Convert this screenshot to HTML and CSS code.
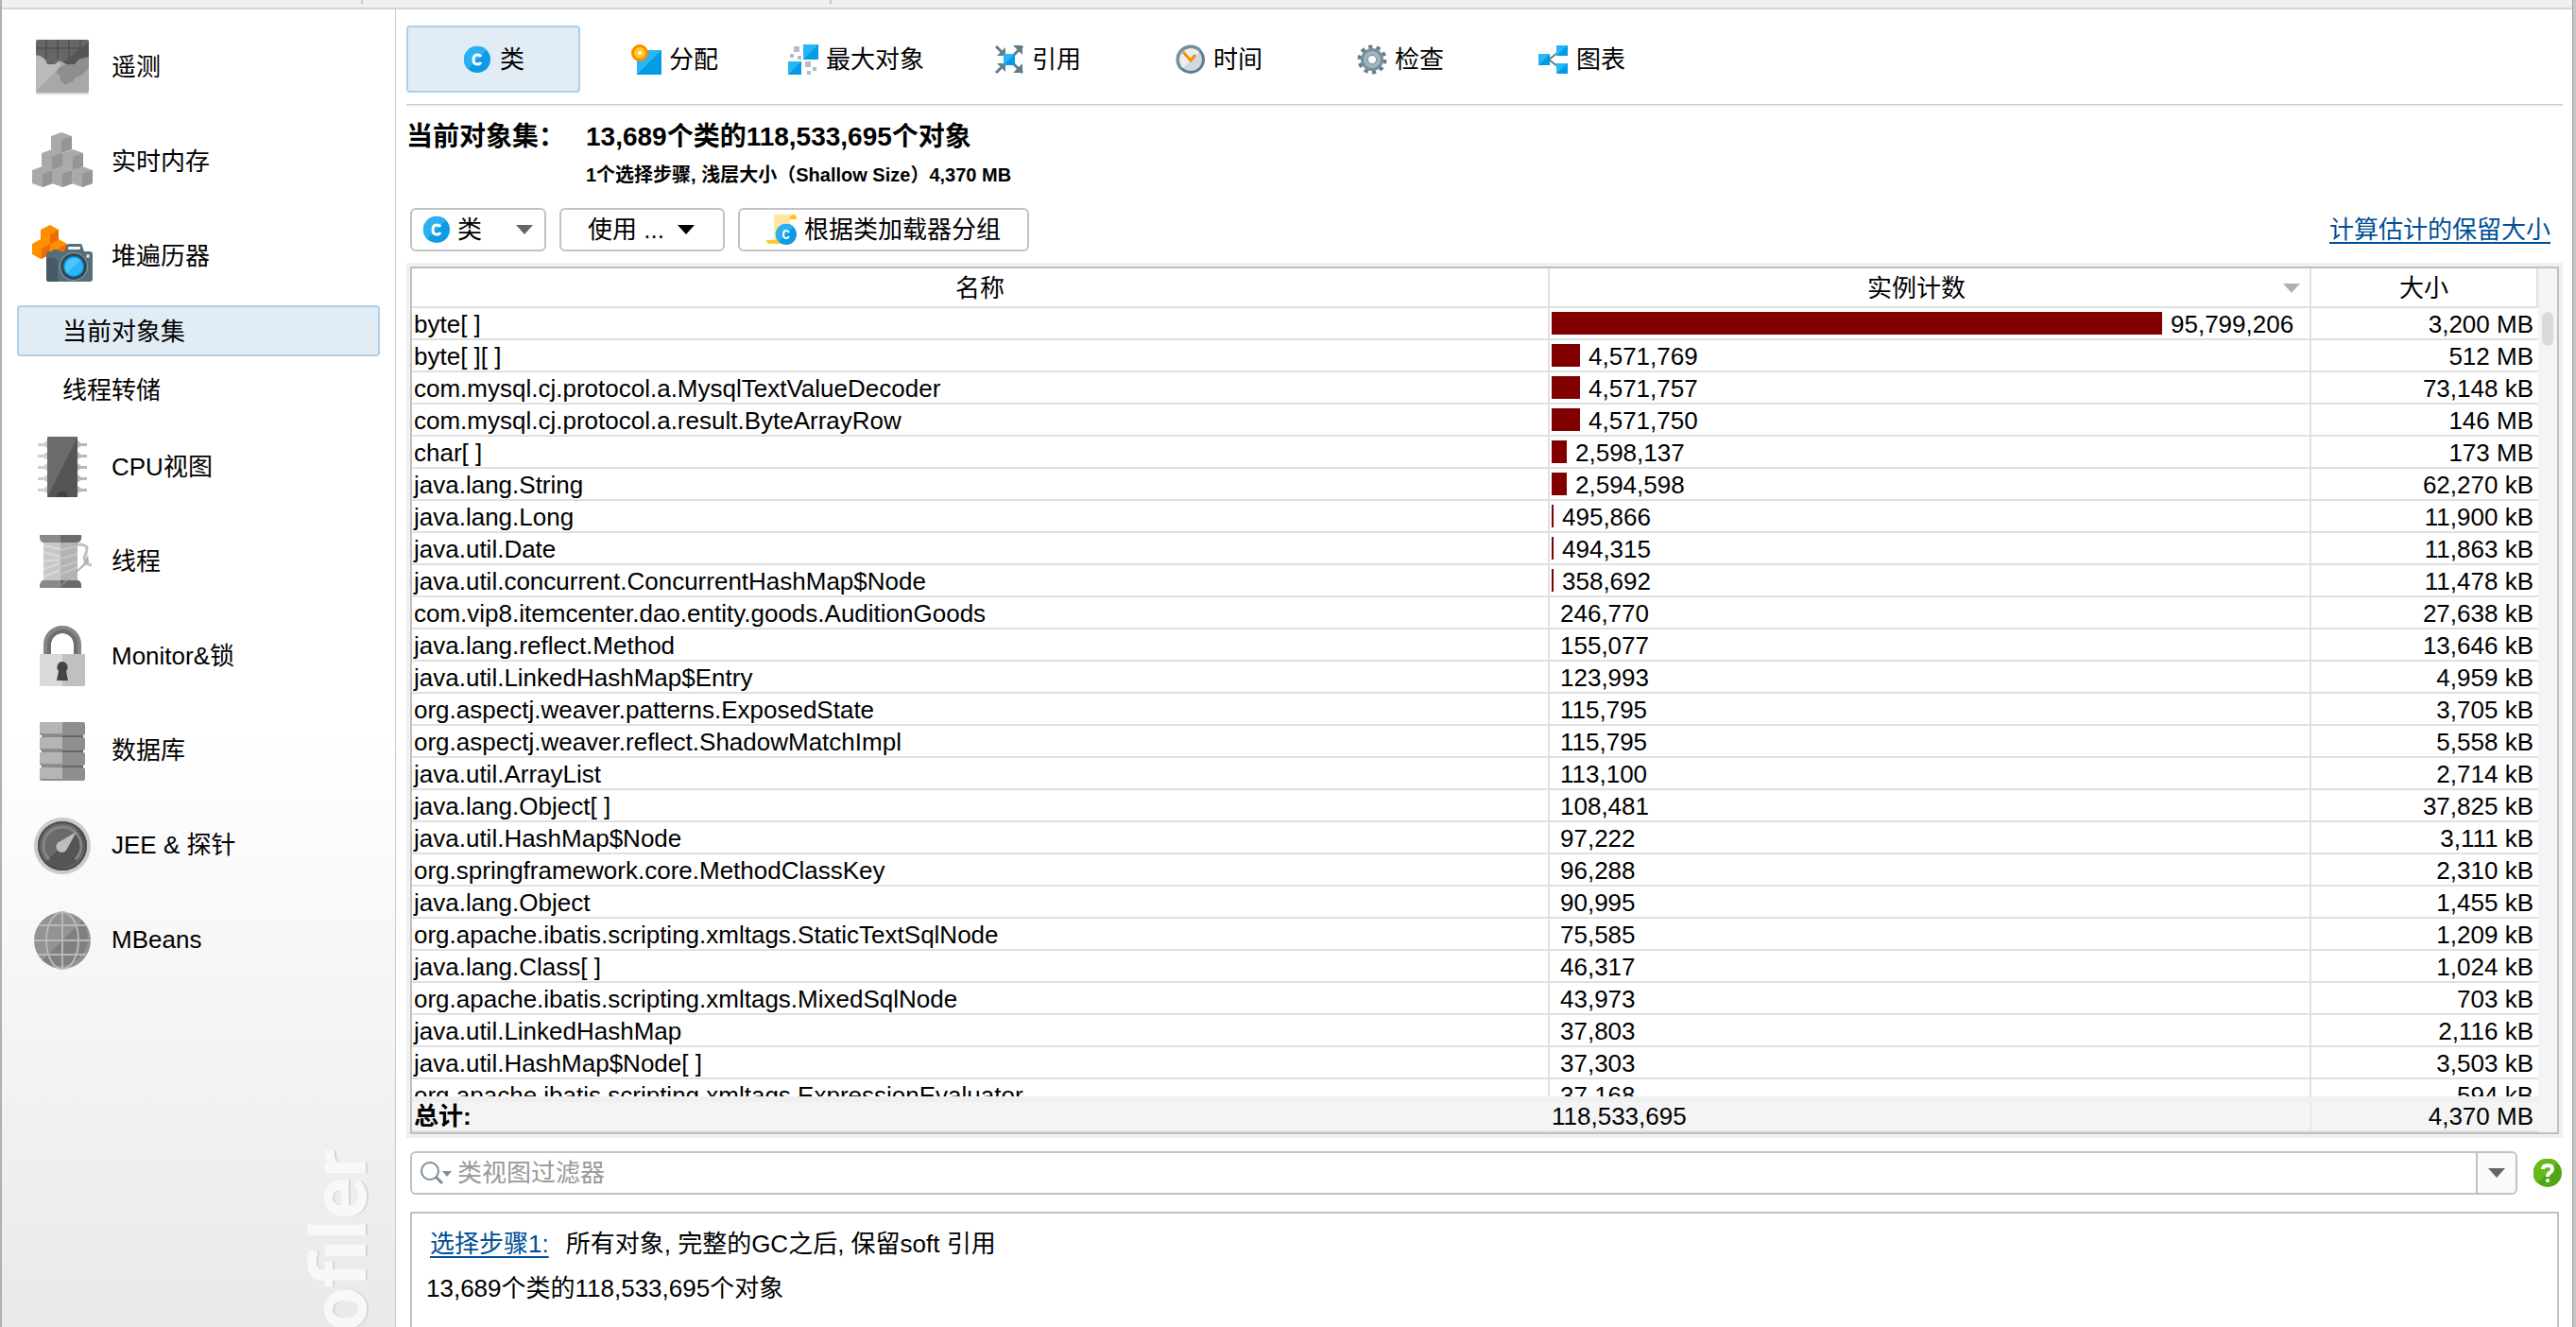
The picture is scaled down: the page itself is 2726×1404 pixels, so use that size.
FILE: index.html
```
<!DOCTYPE html>
<html lang="zh-CN">
  <head>
    <meta charset="UTF-8">
    <meta name="viewport" content="width=device-width, initial-scale=1.0">
    <title>堆遍历器 - 当前对象集</title>
    <link rel="stylesheet" href="styles.css">
  </head>
  <body>
<div class="window">
  <div class="titlebar">
    <span class="tick"></span>
    <span class="tick"></span>
  </div>

  <div class="workspace">
    <!-- Sidebar -->
    <nav class="sidebar">
      <a class="nav-item" href="#">
        <svg class="nav-icon" viewBox="0 0 64 64">
          <rect x="4" y="5" width="56" height="56" rx="2" fill="#d9d9d9" />
          <rect x="4" y="3" width="56" height="56" rx="2" fill="#a8a8a8" />
          <path d="M4 20l6 2 8 7 8-4 5 5-10 10-17 18z" fill="#bababa" />
          <path d="M29 32l7-3h8l6-5 10-3v12l-5 5-3 3-5 1-4 5-8 4-5-5-1-6-4-2z" fill="#8e8e8e" />
          <path d="M4 5q0-2 2-2h52q2 0 2 2v16l-11 3-4 5h-8l-8-4-5 4h-8l-2-5-5-4-5-1z" fill="#666" />
          <path d="M60 5v16l-11 3-4 5h-8l-4-2z" fill="#555" />
          <path d="M4 12h56M15 3v20M27 3v20M39 3v20M51 3v17" stroke="#505050" stroke-width="1.5" fill="none" />
        </svg>
        遥测
      </a>
      <a class="nav-item" href="#">
        <svg class="nav-icon" viewBox="0 0 64 64">
          <defs>
            <g id="cube">
              <path d="M0 4L11 0l11 4v14l-11 4-11-4z" fill="#a9a9a9" />
              <path d="M22 4v14l-11 4V8z" fill="#959595" />
            </g>
          </defs>
          <use href="#cube" x="20" y="1" />
          <use href="#cube" x="10" y="19" />
          <use href="#cube" x="32" y="19" />
          <use href="#cube" x="0" y="37" />
          <use href="#cube" x="21" y="37" />
          <use href="#cube" x="42" y="37" />
        </svg>
        实时内存
      </a>
      <a class="nav-item" href="#">
        <svg class="nav-icon" viewBox="0 0 64 64">
          <path d="M0 19l9-5V4l10-5 9 5v10l9 5v11l-9 5-9-5-10 5-9-5z" fill="#ff8f00" />
          <path d="M19 9l9-5v11l-9 4zM10 24l9-5v11l-9 5zM28 24l9-5v11l-9 5z" fill="#ef6c00" />
          <path d="M34 27l3-7q1-1 2-1h12q2 0 2 2l2 6h6q3 0 3 3v26q0 3-3 3H18q-3 0-3-3V30q0-3 3-3h3l1-2h6l1 2z" fill="#546e7a" />
          <path d="M15 34q11-2 12 5v20h-9q-3 0-3-3z" fill="#455a64" />
          <rect x="38" y="22" width="13" height="3" rx="1" fill="#f5f5f5" />
          <circle cx="59" cy="32" r="2" fill="#cfd8dc" />
          <circle cx="44" cy="43" r="15" fill="#90a4ae" />
          <circle cx="44" cy="43" r="14" fill="#37474f" />
          <circle cx="44" cy="43" r="11" fill="#0288d1" />
          <circle cx="44" cy="43" r="10" fill="#29b6f6" />
          <path d="M37 50A10 10 0 0 1 51 36z" fill="#4fc3f7" />
        </svg>
        堆遍历器
      </a>
      <div class="sub-nav">
        <a class="sub-item selected" href="#">当前对象集</a>
        <a class="sub-item" href="#">线程转储</a>
      </div>
      <a class="nav-item" href="#">
        <svg class="nav-icon" viewBox="0 0 64 64">
          <path d="M16 4v8L12 10H6V7h6zM16 16v8l-4-2H6v-3h6zM16 28v8l-4-2H6v-3h6zM16 40v8l-4-2H6v-3h6zM16 52v8l-4-2H6v-3h6z" fill="#cfcfcf" />
          <path d="M48 4v8l4-2h6V7h-6zM48 16v8l4-2h6v-3h-6zM48 28v8l4-2h6v-3h-6zM48 40v8l4-2h6v-3h-6zM48 52v8l4-2h6v-3h-6z" fill="#b8b8b8" />
          <rect x="16" y="0" width="32" height="64" rx="1" fill="#6b6b6b" />
          <path d="M48 0v64H16z" fill="#555" />
          <path d="M26 64a6 6 0 0 1 12 0z" fill="#404040" />
        </svg>
        CPU视图
      </a>
      <a class="nav-item" href="#">
        <svg class="nav-icon" viewBox="0 0 64 64">
          <path d="M12 12h18v40H12z" fill="#c8c8c8" />
          <path d="M30 12h18v40H30z" fill="#b3b3b3" />
          <path d="M12 15l18 4M12 22l18 5M12 32l18-2M12 40l18-6M12 48l18-7" stroke="#dadada" stroke-width="2" />
          <path d="M30 20l18-4M30 29l18-5M30 38l18-6M30 46l18-8" stroke="#c4c4c4" stroke-width="2" />
          <path d="M8 4h22v8H11q-3-2-3-5zM8 60h22v-8H11q-3 2-3 5z" fill="#8a8a8a" />
          <path d="M30 4h22q1 6-3 8H30zM30 60h22q1-6-3-8H30z" fill="#6b6b6b" />
          <path d="M48 14q10 0 10 4t-3 10q1 7 8 8" stroke="#c0c0c0" stroke-width="3" fill="none" />
          <path d="M25 63l29-28 5-10 1 8-5 4z" fill="#b0b0b0" />
        </svg>
        线程
      </a>
      <a class="nav-item" href="#">
        <svg class="nav-icon" viewBox="0 0 64 64">
          <path d="M16 32V20a16 16 0 0 1 32 0v12" fill="none" stroke="#858585" stroke-width="8" />
          <path d="M18 32V20a14 14 0 0 1 28 0v12" fill="none" stroke="#6e6e6e" stroke-width="4" />
          <path d="M8 30h24v34H9q-1 0-1-1z" fill="#d9d9d9" />
          <path d="M32 30h24v33q0 1-1 1H32z" fill="#c0c0c0" />
          <path d="M32 38a6 6 0 0 1 4 10l2 10H26l2-10a6 6 0 0 1 4-10z" fill="#444" />
        </svg>
        Monitor&amp;锁
      </a>
      <a class="nav-item" href="#">
        <svg class="nav-icon" viewBox="0 0 64 64">
          <defs>
            <g id="disk">
              <rect width="48" height="14" rx="2" fill="#8e8e8e" />
              <path d="M24 0v12H2q-2 0-2-2V2q0-2 2-2z" fill="#b5b5b5" />
            </g>
          </defs>
          <path d="M10 14h22v40H10z" fill="#8a8a8a" />
          <path d="M32 14h22v40H32z" fill="#666" />
          <use href="#disk" x="8" y="2" />
          <use href="#disk" x="8" y="18" />
          <use href="#disk" x="8" y="34" />
          <use href="#disk" x="8" y="50" />
        </svg>
        数据库
      </a>
      <a class="nav-item" href="#">
        <svg class="nav-icon" viewBox="0 0 64 64">
          <circle cx="32" cy="33" r="30" fill="#cacaca" />
          <circle cx="32" cy="33" r="26" fill="#6a6a6a" />
          <path d="M13 51A26 26 0 0 0 50 15z" fill="#555" />
          <circle cx="32" cy="33" r="20" fill="none" stroke="#858585" stroke-width="3" stroke-dasharray="94 32" transform="rotate(135 32 33)" />
          <circle cx="32" cy="33" r="25" fill="none" stroke="#4d4d4d" stroke-width="2" />
          <path d="M47 18L37 36a6 6 0 1 1-7-8z" fill="#bdbdbd" />
        </svg>
        JEE &amp; 探针
      </a>
      <a class="nav-item" href="#">
        <svg class="nav-icon" viewBox="0 0 64 64">
          <circle cx="32" cy="33" r="30" fill="#939393" />
          <path d="M11 54A30 30 0 0 0 53 12z" fill="#7f7f7f" />
          <path d="M32 3v60M2 33h60M7 17h50M7 48h50" stroke="#b8b8b8" stroke-width="2" />
          <ellipse cx="32" cy="33" rx="17" ry="30" fill="none" stroke="#b8b8b8" stroke-width="2" />
        </svg>
        MBeans
      </a>
      <div class="watermark">JProfiler</div>
    </nav>

    <!-- Heap walker -->
    <main class="main">
      <div class="tabs">
        <button class="tab selected" type="button">
          <svg class="icon" viewBox="0 0 32 32">
            <g id="class-icon">
              <circle cx="16" cy="16" r="14" fill="#0d9ae6" />
              <path d="M6 26A14 14 0 0 1 26 6z" fill="#2bb0f2" />
              <path d="M20 13q-1-2-4-2-4 0-4 5t4 5q3 0 4-2" fill="none" stroke="#fff" stroke-width="3" />
            </g>
          </svg>
          类
        </button>
        <button class="tab" type="button">
          <svg class="icon" viewBox="0 0 32 32">
            <path d="M6 6h26v26H6z" fill="#039be5" />
            <path d="M6 6h26L6 32z" fill="#29b6f6" />
            <circle cx="9" cy="9" r="9" fill="#fb8c00" />
            <circle cx="9" cy="9" r="6" fill="#ffca28" />
            <circle cx="9" cy="9" r="2" fill="#fff8e1" />
          </svg>
          分配
        </button>
        <button class="tab" type="button">
          <svg class="icon" viewBox="0 0 32 32">
            <path d="M16 0h16v16H16zM0 18h14v14H0z" fill="#039be5" />
            <path d="M16 0h16L16 16zM0 18h14L0 32z" fill="#29b6f6" />
            <path d="M6 2h6v6H6zM2 10h4v4H2zM10 12h4v4h-4zM18 18h6v6h-6zM26 24h4v4h-4zM20 28h4v4h-4z" fill="#b0bec5" />
          </svg>
          最大对象
        </button>
        <button class="tab" type="button">
          <svg class="icon" viewBox="0 0 32 32">
            <path d="M2 2l8 8M30 2L20 12M2 30l8-8M30 30L20 20" stroke="#607d8b" stroke-width="3" />
            <path d="M12 3v9H3zM20 1h10v10zM12 29v-9H3zM20 30h10V20z" fill="#607d8b" />
            <path d="M10 10h12v12H10z" fill="#039be5" />
            <path d="M10 10h12L10 22z" fill="#29b6f6" />
          </svg>
          引用
        </button>
        <button class="tab" type="button">
          <svg class="icon" viewBox="0 0 32 32">
            <circle cx="16" cy="16" r="15" fill="#607d8b" />
            <path d="M5 27A15 15 0 0 1 27 5z" fill="#78909c" />
            <circle cx="16" cy="16" r="12" fill="#cfd8dc" />
            <path d="M8 25A12 12 0 0 1 25 8z" fill="#eceff1" />
            <path d="M8 8l8 9 5-6" fill="none" stroke="#fb8c00" stroke-width="3" />
          </svg>
          时间
        </button>
        <button class="tab" type="button">
          <svg class="icon" viewBox="0 0 32 32">
            <circle cx="16" cy="16" r="13" fill="none" stroke="#607d8b" stroke-width="5" stroke-dasharray="4 4.168" />
            <circle cx="16" cy="16" r="8" fill="none" stroke="#78909c" stroke-width="8" />
            <circle cx="16" cy="16" r="7" fill="none" stroke="#a3b4bc" stroke-width="4" />
          </svg>
          检查
        </button>
        <button class="tab" type="button">
          <svg class="icon" viewBox="0 0 32 32">
            <path d="M24 6L11 16l13 10" fill="none" stroke="#607d8b" stroke-width="2" />
            <path d="M19 1h12v11H19zM0 10h12v12H0zM19 20h12v11H19z" fill="#039be5" />
            <path d="M19 1h12L19 12zM0 10h12L0 22zM19 20h12L19 31z" fill="#29b6f6" />
          </svg>
          图表
        </button>
      </div>

      <div class="summary">
        <h1 class="summary-title">当前对象集：</h1>
        <p class="summary-title">13,689个类的118,533,695个对象</p>
        <p class="summary-detail">1个选择步骤, 浅层大小（Shallow Size）4,370 MB</p>
      </div>

      <div class="actions">
        <div class="combo">
          <svg class="icon" viewBox="0 0 32 32"><use href="#class-icon" /></svg>
          <select class="combo-select" aria-label="聚合级别">
            <option>类</option>
          </select>
          <svg class="caret" viewBox="0 0 18 10"><path d="M0 0h18L9 10z" /></svg>
        </div>
        <button class="button use-button" type="button">
          使用 ...
          <svg class="caret" viewBox="0 0 18 10"><path d="M0 0h18L9 10z" /></svg>
        </button>
        <button class="button" type="button">
          <svg class="icon" viewBox="0 0 32 32">
            <path d="M8 0h21v5h-4v25H4q4 0 4-4z" fill="#ffe7a3" />
            <path d="M25 5q0-5 4-5 3 0 3 5z" fill="#ffc21a" />
            <path d="M0 27h18v4H4q-4 0-4-4z" fill="#ffc933" />
            <circle cx="21" cy="21" r="11" fill="#0d9ae6" />
            <path d="M13 29A11 11 0 0 1 29 13z" fill="#2bb0f2" />
            <path d="M24 19q-1-2-3-2-3 0-3 4t3 4q2 0 3-2" fill="none" stroke="#fff" stroke-width="2" />
          </svg>
          根据类加载器分组
        </button>
        <a class="link retained-link" href="#">计算估计的保留大小</a>
      </div>

      <div class="table-panel">
        <table class="class-table">
          <thead>
            <tr>
              <th>名称</th>
              <th class="sorted">
                实例计数
                <svg class="caret" viewBox="0 0 18 10"><path d="M0 0h18L9 10z" /></svg>
              </th>
              <th>大小</th>
            </tr>
          </thead>
          <tbody>
            <tr><td>byte[ ]</td><td class="count"><span class="bar" style="width: 646px"></span>95,799,206</td><td>3,200 MB</td></tr>
            <tr><td>byte[ ][ ]</td><td class="count"><span class="bar" style="width: 30px"></span>4,571,769</td><td>512 MB</td></tr>
            <tr><td>com.mysql.cj.protocol.a.MysqlTextValueDecoder</td><td class="count"><span class="bar" style="width: 30px"></span>4,571,757</td><td>73,148 kB</td></tr>
            <tr><td>com.mysql.cj.protocol.a.result.ByteArrayRow</td><td class="count"><span class="bar" style="width: 30px"></span>4,571,750</td><td>146 MB</td></tr>
            <tr><td>char[ ]</td><td class="count"><span class="bar" style="width: 16px"></span>2,598,137</td><td>173 MB</td></tr>
            <tr><td>java.lang.String</td><td class="count"><span class="bar" style="width: 16px"></span>2,594,598</td><td>62,270 kB</td></tr>
            <tr><td>java.lang.Long</td><td class="count"><span class="bar" style="width: 2px"></span>495,866</td><td>11,900 kB</td></tr>
            <tr><td>java.util.Date</td><td class="count"><span class="bar" style="width: 2px"></span>494,315</td><td>11,863 kB</td></tr>
            <tr><td>java.util.concurrent.ConcurrentHashMap$Node</td><td class="count"><span class="bar" style="width: 2px"></span>358,692</td><td>11,478 kB</td></tr>
            <tr><td>com.vip8.itemcenter.dao.entity.goods.AuditionGoods</td><td class="count"><span class="bar" style="width: 0"></span>246,770</td><td>27,638 kB</td></tr>
            <tr><td>java.lang.reflect.Method</td><td class="count"><span class="bar" style="width: 0"></span>155,077</td><td>13,646 kB</td></tr>
            <tr><td>java.util.LinkedHashMap$Entry</td><td class="count"><span class="bar" style="width: 0"></span>123,993</td><td>4,959 kB</td></tr>
            <tr><td>org.aspectj.weaver.patterns.ExposedState</td><td class="count"><span class="bar" style="width: 0"></span>115,795</td><td>3,705 kB</td></tr>
            <tr><td>org.aspectj.weaver.reflect.ShadowMatchImpl</td><td class="count"><span class="bar" style="width: 0"></span>115,795</td><td>5,558 kB</td></tr>
            <tr><td>java.util.ArrayList</td><td class="count"><span class="bar" style="width: 0"></span>113,100</td><td>2,714 kB</td></tr>
            <tr><td>java.lang.Object[ ]</td><td class="count"><span class="bar" style="width: 0"></span>108,481</td><td>37,825 kB</td></tr>
            <tr><td>java.util.HashMap$Node</td><td class="count"><span class="bar" style="width: 0"></span>97,222</td><td>3,111 kB</td></tr>
            <tr><td>org.springframework.core.MethodClassKey</td><td class="count"><span class="bar" style="width: 0"></span>96,288</td><td>2,310 kB</td></tr>
            <tr><td>java.lang.Object</td><td class="count"><span class="bar" style="width: 0"></span>90,995</td><td>1,455 kB</td></tr>
            <tr><td>org.apache.ibatis.scripting.xmltags.StaticTextSqlNode</td><td class="count"><span class="bar" style="width: 0"></span>75,585</td><td>1,209 kB</td></tr>
            <tr><td>java.lang.Class[ ]</td><td class="count"><span class="bar" style="width: 0"></span>46,317</td><td>1,024 kB</td></tr>
            <tr><td>org.apache.ibatis.scripting.xmltags.MixedSqlNode</td><td class="count"><span class="bar" style="width: 0"></span>43,973</td><td>703 kB</td></tr>
            <tr><td>java.util.LinkedHashMap</td><td class="count"><span class="bar" style="width: 0"></span>37,803</td><td>2,116 kB</td></tr>
            <tr><td>java.util.HashMap$Node[ ]</td><td class="count"><span class="bar" style="width: 0"></span>37,303</td><td>3,503 kB</td></tr>
            <tr><td>org.apache.ibatis.scripting.xmltags.ExpressionEvaluator</td><td class="count"><span class="bar" style="width: 0"></span>37,168</td><td>594 kB</td></tr>
          </tbody>
          <tfoot>
            <tr>
              <th scope="row">总计:</th>
              <td>118,533,695</td>
              <td>4,370 MB</td>
            </tr>
          </tfoot>
        </table>
        <div class="scrollbar"><div class="thumb"></div></div>
      </div>

      <div class="filter-row">
        <div class="filter">
          <svg class="search-icon" viewBox="0 0 34 24">
            <circle cx="10" cy="10" r="9" fill="none" stroke="#78909c" stroke-width="2" />
            <path d="M16 16l7 7" stroke="#78909c" stroke-width="3" />
            <path d="M23 10h10l-5 6z" fill="#78909c" />
          </svg>
          <input class="filter-input" type="text" placeholder="类视图过滤器" aria-label="类视图过滤器">
          <button class="filter-history" type="button" aria-label="历史">
            <svg class="caret" viewBox="0 0 18 10"><path d="M0 0h18L9 10z" /></svg>
          </button>
        </div>
        <button class="help" type="button" aria-label="帮助">
          <svg viewBox="0 0 30 30">
            <circle cx="15" cy="15" r="15" fill="#50a617" />
            <path d="M4 26A15 15 0 0 1 26 4z" fill="#66b91c" />
            <path d="M10 11q0-4 5-4t5 4q0 2-3 4-2 1-2 4" fill="none" stroke="#fff" stroke-width="4" />
            <circle cx="15" cy="23" r="2" fill="#fff" />
          </svg>
        </button>
      </div>

      <div class="steps">
        <p class="step"><a class="link" href="#">选择步骤1:</a>所有对象, 完整的GC之后, 保留soft 引用</p>
        <p class="step-result">13,689个类的118,533,695个对象</p>
      </div>
    </main>
  </div>
</div>
  </body>
</html>
```

FILE: styles.css
```
* {
  box-sizing: border-box;
}

body {
  margin: 0;
  padding-right: 3px;
  background-color: #c6c6c6;
  color: #000;
  font:
    26px "Liberation Sans",
    "Noto Sans CJK SC",
    sans-serif;
  line-height: 32px;
}

button,
input,
select {
  font: inherit;
  color: inherit;
}
button {
  cursor: pointer;
}
h1,
p {
  margin: 0;
}
svg {
  display: block;
  flex: none;
}

.window {
  display: flex;
  flex-direction: column;
  height: 100vh;
  overflow: hidden;
  background-color: #fff;
  border-left: 2px solid #b0b0b0;
  border-right: 1px solid #a0a0a0;
}

.titlebar {
  display: flex;
  flex: none;
  height: 10px;
  background-color: #f0f0f0;
  border-bottom: 2px solid #d4d4d4;
}
.tick {
  width: 382px;
  height: 4px;
  border-right: 2px solid #c8c8c8;
}
.tick + .tick {
  width: 496px;
}

.workspace {
  display: flex;
  flex: 1;
  min-height: 0;
}

/* Sidebar */
.sidebar {
  position: relative;
  flex: none;
  width: 417px;
  padding-top: 11px;
  overflow: hidden;
  background-image: linear-gradient(#fff 55%, #e9e9e9);
  border-right: 1px solid #c8c8c8;
}
.nav-item {
  display: flex;
  align-items: center;
  gap: 20px;
  height: 100px;
  padding-left: 32px;
  color: #000;
  text-decoration: none;
}
.nav-icon {
  width: 64px;
  height: 64px;
  overflow: visible;
}
.sub-nav {
  display: flex;
  flex-direction: column;
  gap: 8px;
  padding: 2px 16px 5px;
}
.sub-item {
  display: flex;
  align-items: center;
  height: 54px;
  padding-top: 2px;
  padding-left: 46px;
  border: 2px solid transparent;
  border-radius: 4px;
  color: #000;
  text-decoration: none;
}
.selected {
  background-color: #e2ecf5;
  border-color: #afcfe8;
}
.watermark {
  position: absolute;
  top: 1206px;
  left: 309px;
  color: #f8f8f8;
  font:
    bold 82px Roboto,
    sans-serif;
  line-height: 96px;
  white-space: nowrap;
  writing-mode: vertical-rl;
  transform: rotate(180deg);
  text-shadow: 0 2px 0 #d6d6d6;
}

/* Main area */
.main {
  display: flex;
  flex: 1;
  flex-direction: column;
  min-width: 0;
  padding: 0 10px 0 11px;
}
.icon {
  width: 32px;
  height: 32px;
}
.caret {
  width: 18px;
  height: 10px;
}
.link {
  color: #004f96;
  text-decoration: underline;
  text-decoration-thickness: 2px;
  text-underline-offset: 4px;
}

.tabs {
  display: flex;
  gap: 8px;
  padding: 17px 0 12px;
  border-bottom: 1px solid #c8c8c8;
  box-shadow: 0 2px 0 #f0f0f0;
}
.tab {
  display: flex;
  align-items: center;
  justify-content: center;
  gap: 8px;
  width: 184px;
  height: 71px;
  padding: 0;
  background-color: transparent;
  border: 2px solid transparent;
  border-radius: 4px;
}
.tab.selected {
  background-color: #e2ecf5;
  border-color: #afcfe8;
}

.summary {
  display: grid;
  grid-template-columns: 190px 1fr;
  row-gap: 5px;
  padding: 14px 0 20px;
}
.summary-title {
  font-size: 28px;
  font-weight: bold;
  line-height: 40px;
  white-space: nowrap;
}
.summary-detail {
  grid-column: 2;
  font-size: 20px;
  font-weight: bold;
  line-height: 30px;
}

.actions {
  display: flex;
  align-items: center;
  gap: 14px;
  margin: 0 4px;
}
.combo,
.button {
  display: flex;
  align-items: center;
  gap: 8px;
  height: 46px;
  background-color: #fff;
  border: 2px solid #c2c2c2;
  border-radius: 6px;
}
.combo {
  gap: 6px;
  width: 144px;
  padding: 0 12px 0 10px;
  fill: #666;
}
.combo-select {
  flex: 1;
  min-width: 0;
  padding: 0;
  background-color: transparent;
  border: none;
  appearance: none;
}
.button {
  padding: 0 28px;
}
.use-button {
  gap: 14px;
  padding: 0 30px 0 28px;
}
.retained-link {
  margin-left: auto;
  margin-right: 9px;
}

/* Class table: the body is clipped between the header and the totals */
.table-panel {
  display: flex;
  flex: 1 1 0;
  min-height: 0;
  margin: 16px 4px 0;
  border: 2px solid #c0c0c0;
  box-shadow: 0 0 0 4px #f0f0f0;
}
.class-table {
  display: flex;
  flex: 1;
  flex-direction: column;
  min-width: 0;
}
.class-table thead,
.class-table tfoot {
  display: block;
  flex: none;
}
.class-table tbody {
  display: block;
  flex: 1;
  min-height: 0;
  overflow: hidden;
}
.class-table tr {
  display: grid;
  grid-template-columns: 1fr 806px 240px;
}
.class-table th,
.class-table td {
  display: block;
  padding: 2px 2px 0;
  border-right: 2px solid #e0e0e0;
  border-bottom: 2px solid #e0e0e0;
  line-height: 30px;
  white-space: nowrap;
}
.class-table td:last-child {
  padding-right: 5px;
  border-right: none;
  text-align: right;
}
.class-table thead th {
  padding: 6px 0 4px;
  font-weight: normal;
}
.class-table thead .sorted {
  display: grid;
  grid-template-columns: 1fr 28px;
  align-items: center;
  fill: #b0b0b0;
}
.class-table td.count {
  display: flex;
  gap: 9px;
}
.bar {
  flex: none;
  height: 24px;
  margin-top: 2px;
  background-color: #800000;
}
.class-table tfoot tr {
  background-color: #f4f4f4;
  border-top: 6px solid #f0f0f0;
}
.class-table tfoot th,
.class-table tfoot td {
  padding-top: 0;
  border-right-width: 1px;
  text-align: left;
}
.class-table tfoot th {
  border-right-color: #f4f4f4;
}
.scrollbar {
  flex: none;
  width: 20px;
  padding: 46px 4px 0;
  background-color: #f4f4f4;
}
.thumb {
  width: 12px;
  height: 36px;
  background-color: #dadada;
  border-radius: 6px;
}

/* Filter */
.filter-row {
  display: flex;
  align-items: center;
  gap: 17px;
  margin: 18px 1px 18px 4px;
}
.filter {
  display: flex;
  flex: 1;
  align-items: center;
  height: 46px;
  border: 2px solid #c2c2c2;
  border-radius: 6px;
}
.search-icon {
  width: 34px;
  height: 24px;
  margin: 0 5px 0 9px;
}
.filter-input {
  flex: 1;
  min-width: 0;
  padding: 0;
  background-color: transparent;
  border: none;
  outline: none;
}
.filter-input::placeholder {
  color: #999;
}
.filter-history {
  display: flex;
  align-items: center;
  justify-content: center;
  width: 42px;
  height: 42px;
  padding: 0;
  background-color: #fafafa;
  border: none;
  border-left: 2px solid #c2c2c2;
  border-radius: 0 4px 4px 0;
  fill: #666;
}
.help {
  width: 30px;
  height: 30px;
  padding: 0;
  background: none;
  border: none;
}

/* Selection steps */
.steps {
  flex: none;
  height: 122px;
  margin: 0 4px;
  padding: 16px 15px;
  border: 2px solid #c0c0c0;
  border-bottom: none;
}
.step {
  padding-left: 4px;
}
.step .link {
  margin-right: 18px;
}
.step-result {
  margin-top: 15px;
}
```
